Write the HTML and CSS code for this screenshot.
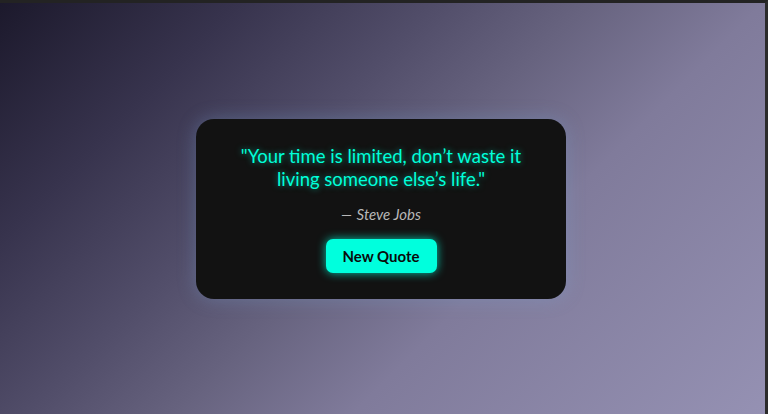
FILE: index.html
```html
<!DOCTYPE html>
<html lang="en">
<head>
<meta charset="utf-8">
<title>Quote</title>
<link rel="stylesheet" href="styles.css">
</head>
<body>
<div class="frame">
  <main class="stage">
    <section class="card">
      <p class="quote">"Your time is limited, don’t waste it living someone else’s life."</p>
      <p class="author">— Steve Jobs</p>
      <button class="btn" type="button">New Quote</button>
    </section>
  </main>
</div>
</body>
</html>
```
FILE: styles.css
```css
* { box-sizing: border-box; }
html, body { margin: 0; padding: 0; height: 100%; }
body {
  font-family: "Lato", "Open Sans", "Noto Sans", sans-serif;
  background: #242424;
}
.frame {
  height: 100%;
  border-top: 3px solid #232323;
  border-right: 3px solid #2b2b2b;
}
.stage {
  height: 100%;
  background: linear-gradient(135deg, #1c192c 0%, #37334d 20%, #514d69 37%, #67637f 50%, #807b9b 65%, #9591b3 100%);
  display: flex;
  align-items: flex-start;
  justify-content: center;
  padding-top: 116px;
  padding-right: 3px;
}
.card {
  width: 370px;
  height: 180px;
  background: #121212;
  border-radius: 18px;
  box-shadow: 0 0 18px rgba(120, 160, 210, 0.35);
  display: flex;
  flex-direction: column;
  align-items: center;
  padding: 26px 38px 0;
  text-align: center;
}
.quote {
  margin: 0;
  color: #00ffd9;
  font-size: 18.5px;
  line-height: 23px;
  text-shadow: 0 0 6px rgba(0, 255, 217, 0.55);
}
.author {
  margin: 14px 0 0;
  color: #b8b8b8;
  font-style: italic;
  font-size: 15px;
  line-height: 18px;
}
.author::first-letter { letter-spacing: 1px; }
.btn {
  margin-top: 16px;
  width: 111px;
  height: 34px;
  border: 0;
  border-radius: 7px;
  background: #00ffdd;
  color: #0a0a0a;
  font-family: inherit;
  font-weight: 700;
  font-size: 15px;
  box-shadow: 0 0 10px rgba(0, 255, 221, 0.75);
}
```
